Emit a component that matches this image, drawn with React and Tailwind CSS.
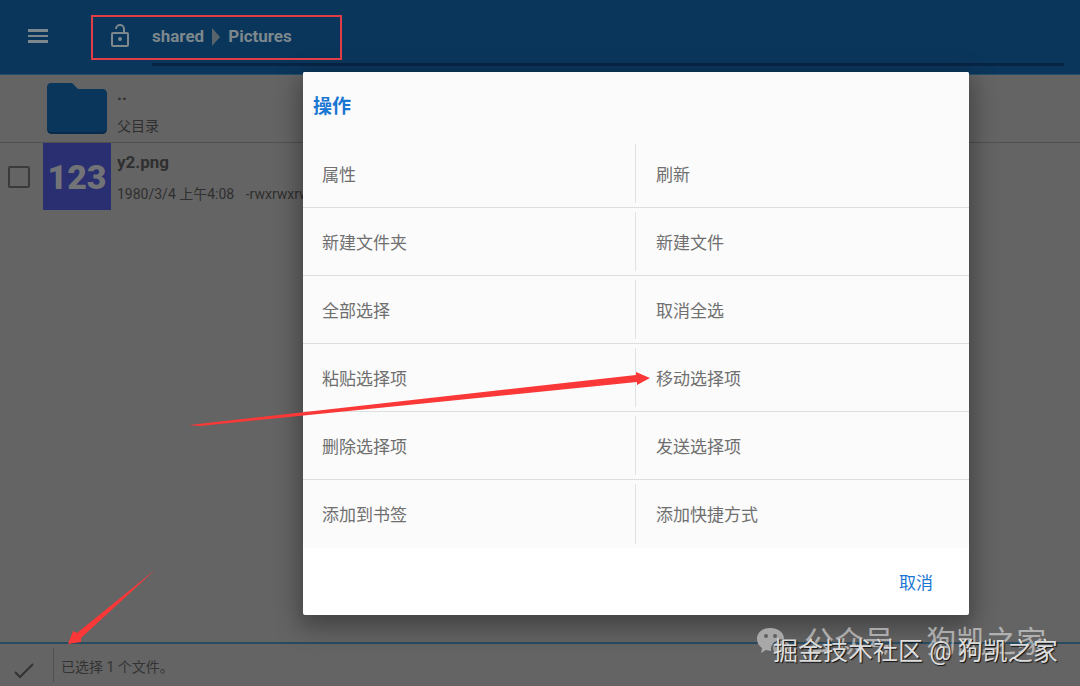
import { useState } from "react";

const ACTIONS = [
  ["属性", "刷新"],
  ["新建文件夹", "新建文件"],
  ["全部选择", "取消全选"],
  ["粘贴选择项", "移动选择项"],
  ["删除选择项", "发送选择项"],
  ["添加到书签", "添加快捷方式"],
];

function TopBar() {
  return (
    <header className="flex h-[75px] border-b border-[#23506f] bg-[#0b365b] text-[#7d888d]">
      <button aria-label="菜单" className="flex h-[72px] w-[76px] items-center justify-center">
        <svg width="20" height="16" viewBox="0 0 20 16" fill="currentColor">
          <rect y="1" width="20" height="3" />
          <rect y="7" width="20" height="2" />
          <rect y="12" width="20" height="3" />
        </svg>
      </button>
      <div className="mr-4 flex flex-1">
        <div className="flex w-[76px] pt-6 pl-[34px]">
          <svg width="20" height="24" viewBox="0 0 20 24" fill="none" stroke="currentColor" strokeWidth="2">
            <rect x="2" y="9" width="16" height="13" rx="1" />
            <path d="M6 5a4 4 0 0 1 8 0v4" />
            <circle cx="10" cy="15" r="2" fill="currentColor" stroke="none" />
          </svg>
        </div>
        <nav className="flex h-[66px] flex-1 items-start border-b-[3px] border-[#082546] pt-6 text-[17px] font-bold">
          <a href="#shared" className="leading-6">
            shared
          </a>
          <svg className="mx-2 mt-1" width="8" height="18" viewBox="0 0 8 18" fill="#58636a">
            <path d="M0 0l8 9-8 9z" />
          </svg>
          <a href="#pictures" className="leading-6">
            Pictures
          </a>
        </nav>
      </div>
    </header>
  );
}

function FileList() {
  const [checked, setChecked] = useState(false);

  return (
    <ul className="flex-1 text-[#2f2f2f]">
      <li className="flex h-[68px] border-b border-[#505050]">
        <svg className="mt-2 ml-[46px]" width="62" height="52" viewBox="0 0 62 52">
          <path
            d="M5 1h20q2 0 3 2l4 4h24q5 0 5 5v34q0 5-5 5H6q-5 0-5-5V6q0-5 4-5z"
            fill="#082b4b"
          />
          <path
            d="M5 0h20q2 0 3 2l4 4h24q5 0 5 5v33q0 5-5 5H6q-5 0-5-5V5q0-5 4-5z"
            fill="#0b365b"
          />
        </svg>
        <div className="ml-[9px] pt-[7px]">
          <p className="text-[17px] leading-6 font-bold">..</p>
          <p className="mt-2 text-sm leading-6">父目录</p>
        </div>
      </li>
      <li className="flex h-[67px] items-center">
        <input
          type="checkbox"
          aria-label="y2.png"
          checked={checked}
          onChange={(e) => setChecked(e.target.checked)}
          className="mr-[13px] ml-2 size-[22px] appearance-none rounded-xs border-2 border-[#3a3a3a] checked:bg-[#3a3a3a]"
        />
        <div className="flex h-[67px] w-[68px] items-center justify-center bg-[#292f70] text-[34px] leading-10 font-black text-[#717377]">
          123
        </div>
        <div className="ml-[6px] pt-[3px] whitespace-nowrap">
          <p className="text-[17px] leading-6 font-bold">y2.png</p>
          <p className="mt-2 text-sm leading-6">
            1980/3/4 上午4:08 <span className="ml-2">-rwxrwxrw</span>
          </p>
        </div>
      </li>
    </ul>
  );
}

function StatusBar() {
  return (
    <footer className="flex h-11 border-t-2 border-[#294b60] text-[#333333]">
      <div className="my-1 flex w-[54px] items-center border-r border-[#505050] pt-3 pl-[14px]">
        <svg width="20" height="16" viewBox="0 0 20 16" fill="none" stroke="currentColor" strokeWidth="2">
          <path d="M1 9l5 5L19 1" />
        </svg>
      </div>
      <p className="pt-[11px] pl-[7px] text-sm leading-6">已选择 1 个文件。</p>
    </footer>
  );
}

function ActionDialog() {
  return (
    <section
      role="dialog"
      aria-label="操作"
      className="absolute top-[72px] right-[111px] left-[303px] rounded-xs bg-white shadow-[0_8px_24px_4px_rgba(0,0,0,0.35)]"
    >
      <div className="rounded-t-xs bg-[#fbfbfb]">
        <h2 className="h-[68px] pt-[21px] pl-[10px] text-[19px] leading-7 font-bold text-[#1976d2]">
          操作
        </h2>
        <div className="divide-y divide-[#dedede]">
          {ACTIONS.map(([left, right]) => (
            <div key={left} className="grid h-[68px] grid-cols-2 py-1 text-[17px] text-[#6f6f6f]">
              <button className="border-r border-[#e2e2e2] pt-1 pl-[19px] text-left">{left}</button>
              <button className="pt-1 pl-5 text-left">{right}</button>
            </div>
          ))}
        </div>
      </div>
      <div className="flex h-[67px] items-center justify-end pt-1 pr-9">
        <button className="text-[17px] text-[#1976d2]">取消</button>
      </div>
    </section>
  );
}

// red frame and arrows drawn over the screen
function Annotations() {
  return (
    <div className="pointer-events-none absolute inset-0">
      <div className="absolute top-[15px] left-[91px] h-[45px] w-[251px] border-2 border-[#e13d46]" />
      <svg className="absolute top-0 left-0" width="660" height="686" viewBox="0 0 660 686" fill="#fb3838">
        <path d="M189 425L636 375V372L650 378L637 385V382L200 426z" />
        <path d="M156 569L77 633L73 631L68 644L81 642L81 638z" />
      </svg>
    </div>
  );
}

function Watermarks() {
  return (
    <div className="pointer-events-none absolute right-0 bottom-0 h-[72px] w-[326px] whitespace-nowrap">
      <div className="absolute top-2 left-[2px] flex items-center text-[30px] leading-10 text-white/50">
        <svg width="36" height="32" viewBox="0 0 36 32">
          <path
            d="M14 2C6 2 1 7 1 13c0 4 2 7 5 9l-1 5 5-3 5 1c-1-7 5-12 13-12C28 6 22 2 14 2z"
            fill="#a8a8a8"
          />
          <path
            d="M26 15c-5 0-9 3-9 7s4 7 9 7l4-1 3 2-1-4c2-1 3-2 3-4 0-4-4-7-9-7z"
            fill="#a0a0a0"
          />
          <g fill="#606060">
            <circle cx="10" cy="10" r="2" />
            <circle cx="19" cy="10" r="2" />
            <circle cx="23" cy="20" r="1" />
            <circle cx="30" cy="20" r="1" />
          </g>
        </svg>
        <span className="ml-3">公众号</span>
        <span className="mx-2 text-base">·</span>
        <span className="ml-3">狗凯之家</span>
      </div>
      <p className="absolute top-5 left-[19px] text-[25px] leading-9 text-[#dddddd] [text-shadow:1px_1px_1px_#111]">
        掘金技术社区 @ 狗凯之家
      </p>
    </div>
  );
}

function App() {
  return (
    <div className="relative flex min-h-screen flex-col overflow-hidden bg-[#646464] font-['Roboto','Noto_Sans_CJK_SC',sans-serif]">
      <TopBar />
      <FileList />
      <StatusBar />
      <ActionDialog />
      <Watermarks />
      <Annotations />
    </div>
  );
}

export default App;
